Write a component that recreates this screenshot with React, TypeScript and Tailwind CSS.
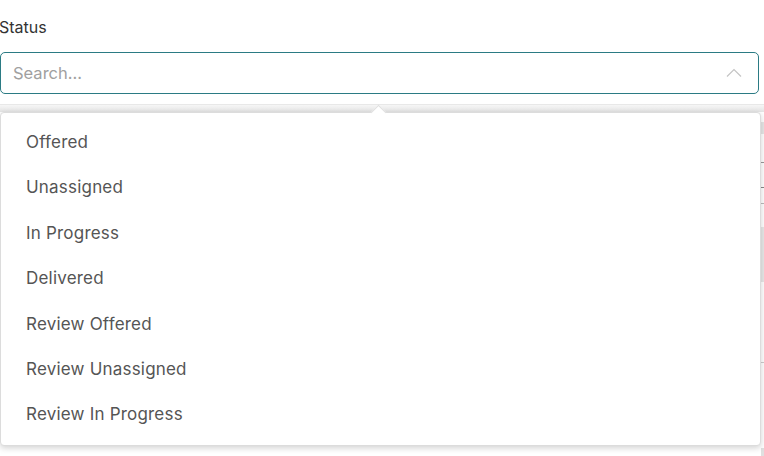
import React from "react";

const items = [
  "Offered",
  "Unassigned",
  "In Progress",
  "Delivered",
  "Review Offered",
  "Review Unassigned",
  "Review In Progress",
];

export default function App() {
  return (
    <div
      className="relative w-[764px] h-[456px] overflow-hidden bg-white"
      style={{ fontFamily: "Inter, Lato, sans-serif" }}
    >
      <div className="pt-[17px]">
        <div className="text-[16px] leading-[20px] text-[#333] -ml-px">Status</div>
        <div className="mt-[15px] w-[759px] h-[42px] border border-[#2b7b84] rounded-[5px] flex items-center justify-between pl-[12px] pr-[15px]">
          <span className="text-[16.5px] text-[#a0a0a0]">Search...</span>
          <svg width="16" height="10" viewBox="0 0 16 10" className="mr-[1px]">
            <polyline points="1,8.5 8,1.5 15,8.5" fill="none" stroke="#c4c4c4" strokeWidth="1.2" />
          </svg>
        </div>
        <div className="mt-[10px] h-[8px] bg-gradient-to-b from-[#f6f6f6] to-[#e4e4e4] border-t border-[#e8e8e8]" />
        <div className="flex justify-end">
          <div className="w-[3px] h-[344px] flex flex-col bg-white">
            <div className="mt-[10px] h-[12px] bg-[#e6e6e6]" />
            <div className="mt-[28px] h-px bg-[#999]" />
            <div className="mt-[24px] h-px bg-[#888]" />
            <div className="mt-[15px] h-px bg-[#bbb]" />
            <div className="mt-[23px] h-[55px] bg-[#e8e8e8]" />
            <div className="mt-[80px] h-px bg-[#ccc]" />
            <div className="mt-[85px] h-[8px] bg-[#e0e0e0]" />
          </div>
        </div>
      </div>

      {/* dropdown */}
      <div className="absolute left-0 top-[112px] w-[761px] h-[334px] bg-white rounded-[4px] border border-[#dcdcdc] shadow-[0_2px_6px_rgba(0,0,0,0.18)]">
        <div className="absolute left-[372px] -top-[6px] w-[11px] h-[11px] bg-white rotate-45 border-l border-t border-[#e0e0e0]" />
        <div className="relative pt-[7px] flex flex-col">
          {items.map((it) => (
            <div key={it} className="h-[45.4px] flex items-center pl-[25px] text-[17px] tracking-[0.2px] text-[#555]">
              {it}
            </div>
          ))}
        </div>
      </div>
    </div>
  );
}
